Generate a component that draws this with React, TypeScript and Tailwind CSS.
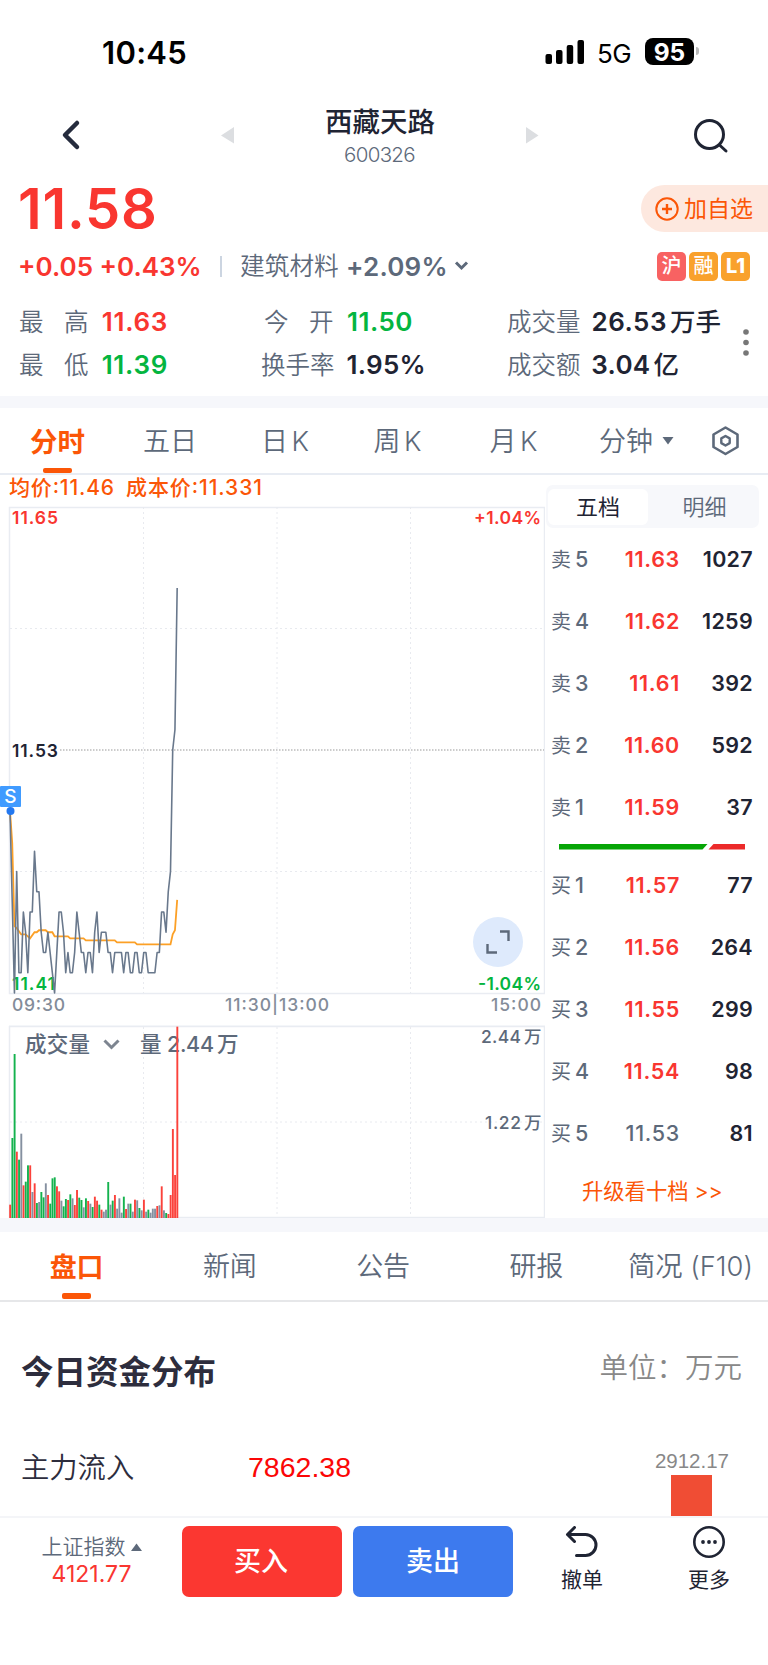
import type { ReactNode } from 'react'
import clsx from 'clsx'

// minute-by-minute prices, in cents above 11.00
const PRICES = [
    50, 45.5, 41, 47, 42, 42, 45, 44, 42, 45, 45, 48, 46, 46, 44, 43, 43, 44, 43, 42,
    41, 43, 45, 45, 44, 42, 43, 42, 42, 43, 45, 44, 43, 43, 42, 43, 43, 42, 44, 45,
    43, 44, 44, 44, 43, 43, 42, 43, 43, 43, 43, 42, 43, 43, 42, 42, 43, 43, 42, 42,
    43, 43, 42, 42, 42, 42, 43, 43, 45, 45, 44, 46, 47, 53, 54, 61,
]

// average price: [minute, cents above 11.00]
const AVERAGE = [
    [0, 50], [1, 48.4], [2, 44.3], [3, 44.2], [5, 43.9], [7, 43.9], [9, 43.7], [11, 44],
    [12, 44], [13, 44.1], [16, 44.1], [17, 44], [19, 44], [20, 43.8], [26, 43.8], [27, 43.7],
    [33, 43.7], [34, 43.6], [47, 43.6], [48, 43.5], [56, 43.5], [57, 43.4], [72, 43.4],
    [73, 43.9], [74, 44.1], [75, 45.6],
]

// volume bars: r = up, g = down, n = flat
const VOLUMES =
    'r40 g240 g492 r199 g175 n253 r98 g109 g158 r158 n78 r104 g45 n48 g78 g62 n104 r69 g43 g119 ' +
    'g122 r95 r80 n52 g35 g57 r54 g71 n59 r39 r84 g61 g54 n32 g59 r51 n43 g33 r64 r52 ' +
    'g40 r25 n19 n25 g108 n40 g52 r69 n28 n59 n16 g64 r27 n43 g43 n19 r55 n53 g30 n23 ' +
    'r55 n19 g25 n16 n28 n28 r36 n38 r95 n23 g15 r12 r69 r267 r129 r574'

const BAR_COLORS: Record<string, string> = { r: '#fb423b', g: '#14b24e', n: '#8590a0' }

const SELLS = [
    ['5', '11.63', '1027'],
    ['4', '11.62', '1259'],
    ['3', '11.61', '392'],
    ['2', '11.60', '592'],
    ['1', '11.59', '37'],
]

const BUYS = [
    ['1', '11.57', '77'],
    ['2', '11.56', '264'],
    ['3', '11.55', '299'],
    ['4', '11.54', '98'],
    ['5', '11.53', '81'],
]

const minuteX = (i: number) => 10 + i * 2.229
const priceY = (cents: number) => 32 + (65 - cents) * 20.25

function StatusBar() {
    return (
        <div className="flex h-[104px] items-start pt-[33px] pl-[102px] text-black">
            <span className="w-[443px] text-[31px] leading-[40px] font-semibold tracking-[0.3px]">10:45</span>
            <svg width="40" height="40" className="mr-[12px]">
                <rect x="0.500" y="21" width="6.500" height="10" rx="2" />
                <rect x="11" y="17" width="6.500" height="14" rx="2" />
                <rect x="21.700" y="12" width="6.500" height="19" rx="2" />
                <rect x="32.500" y="7" width="6.500" height="24" rx="2" />
            </svg>
            <span className="w-[48px] text-[26px] leading-[41px] tracking-[-0.5px]">5G</span>
            <span className="mt-[5px] h-[27px] w-[49px] rounded-[8px] bg-black text-center text-[24.500px] leading-[28px] font-bold text-white">95</span>
            <span className="mt-[14px] ml-[2px] h-[8px] w-[3px] rounded-r-full bg-[#b9b9b9]" />
        </div>
    )
}

function NavBar() {
    return (
        <div className="flex h-[80px] items-start">
            <svg width="320" height="60" fill="none">
                <path d="M77 19L65 31L77 43" stroke="#252b3d" strokeWidth="4.500" strokeLinecap="round" strokeLinejoin="round" />
                <path d="M221 31.500L234 23V39.500Z" fill="#dcdee1" />
            </svg>
            <div className="flex w-[120px] flex-col items-center">
                <h1 className="text-[27.500px] leading-[36px] font-medium whitespace-nowrap text-[#1f2433]">西藏天路</h1>
                <span className="mt-[2px] mr-[1px] text-[20.500px] leading-[26px] font-light tracking-[-0.7px] text-[#5d697a]">600326</span>
            </div>
            <svg width="328" height="60" fill="none">
                <path d="M86 23V39.500L98.500 31.500Z" fill="#dcdee1" />
                <circle cx="269.500" cy="30.500" r="14" stroke="#1f2433" strokeWidth="3" />
                <path d="M279.500 41L286 47" stroke="#1f2433" strokeWidth="3" strokeLinecap="round" />
            </svg>
        </div>
    )
}

function Badge({ className, children }: { className: string; children: ReactNode }) {
    return (
        <span className={clsx('flex size-[29px] items-center justify-center rounded-[5px] text-[20px] leading-none text-white', className)}>
            {children}
        </span>
    )
}

function Stat({ label, value, className }: { label: ReactNode; value: ReactNode; className: string }) {
    return (
        <div className="flex h-[43px] items-center whitespace-nowrap">
            <span className="flex pt-[1px] text-[24.500px] font-[350] text-[#5d697a]">{label}</span>
            <span className={clsx('ml-auto text-[26px] font-semibold', className)}>{value}</span>
        </div>
    )
}

function Unit({ children }: { children: ReactNode }) {
    return <span className="ml-[3px] text-[25.500px] font-medium tracking-normal">{children}</span>
}

function Quote() {
    return (
        <section className="flex h-[212px] flex-col">
            <div className="flex h-[56px] items-center justify-between pl-[18px]">
                <span className="mt-[-6px] text-[56px] leading-[56px] font-semibold tracking-[0.8px] text-[#f93630]">11.58</span>
                <button className="mt-[-7px] flex h-[47px] w-[127px] items-center rounded-l-full bg-[#fde8df] pl-[14px] text-[23px] text-[#fb5607]">
                    <svg width="24" height="24" fill="none" stroke="#fb5607" strokeWidth="2" className="mr-[5px]">
                        <circle cx="12" cy="12" r="10.700" />
                        <path d="M7 12H17M12 7V17" strokeWidth="2.400" />
                    </svg>
                    <span className="pt-[2px] whitespace-nowrap">加自选</span>
                </button>
            </div>
            <div className="flex h-[52px] items-center text-[26px] whitespace-nowrap">
                <span className="w-[220px] pl-[18px] font-semibold text-[#f93630]">+0.05 +0.43%</span>
                <span className="h-[21px] w-[2px] bg-[#ccd5e1]" />
                <span className="mt-[2px] ml-[18px] w-[106px] text-[24.700px] font-[350] text-[#5d697a]">建筑材料</span>
                <span className="w-[107px] font-semibold tracking-[0.2px] text-[#5d697a]">+2.09%</span>
                <svg width="16" height="12" fill="none" className="mr-[188px]">
                    <path d="M3 2.500L8.500 8L14 2.500" stroke="#5d697a" strokeWidth="3" />
                </svg>
                <div className="flex gap-[3px]">
                    <Badge className="bg-[#f86262] font-medium">沪</Badge>
                    <Badge className="bg-[#f9a12c] font-medium">融</Badge>
                    <Badge className="bg-[#f9a12c] font-extrabold">L1</Badge>
                </div>
            </div>
            <div className="flex pt-[8px]">
                <div className="ml-[19px] w-[149px]">
                    <Stat label={<><i className="w-[45px] not-italic">最</i>高</>} value="11.63" className="tracking-[0.7px] text-[#f93630]" />
                    <Stat label={<><i className="w-[45px] not-italic">最</i>低</>} value="11.39" className="tracking-[0.7px] text-[#04b540]" />
                </div>
                <div className="ml-[93px]">
                    <div className="w-[152px] pl-[3px]">
                        <Stat label={<><i className="w-[45px] not-italic">今</i>开</>} value="11.50" className="tracking-[0.5px] text-[#04b540]" />
                    </div>
                    <div className="w-[165px]">
                        <Stat label="换手率" value="1.95%" className="tracking-[0.3px] text-[#1f2433]" />
                    </div>
                </div>
                <div className="ml-[81px]">
                    <div className="w-[214px]">
                        <Stat label="成交量" value={<>26.53<Unit>万手</Unit></>} className="tracking-[0.5px] text-[#1f2433]" />
                    </div>
                    <div className="w-[172px]">
                        <Stat label="成交额" value={<>3.04<Unit>亿</Unit></>} className="tracking-[0.3px] text-[#1f2433]" />
                    </div>
                </div>
                <svg width="10" height="30" fill="#777" className="mt-[28px] ml-auto mr-[17px]">
                    <circle cx="5" cy="4" r="2.800" />
                    <circle cx="5" cy="14.500" r="2.800" />
                    <circle cx="5" cy="25" r="2.800" />
                </svg>
            </div>
        </section>
    )
}

function PeriodTabs() {
    return (
        <nav className="flex h-[67px] items-stretch border-b-2 border-[#e8ecf3] text-[27px] leading-[68px] font-[350] whitespace-nowrap text-[#5d697a] [word-spacing:-4px]">
            <div className="flex w-[115px] flex-col items-center text-[#fb5607]">
                <span className="h-[60px] text-[27.500px] leading-[69px] font-bold">分时</span>
                <i className="h-[5px] w-[29px] rounded-[2px] bg-[#fb5607]" />
            </div>
            <span className="w-[110px] text-center">五日</span>
            <span className="w-[120px] text-center">日 K</span>
            <span className="w-[105px] text-center">周 K</span>
            <span className="w-[127px] text-center">月 K</span>
            <span className="pl-[22px]">分钟</span>
            <svg width="12" height="10" className="mt-[28px] ml-[9px]" fill="#5d697a">
                <path d="M0.500 1H11.500L6 8.500Z" />
            </svg>
            <svg width="30" height="32" className="mt-[17px] ml-auto mr-[28px]" fill="none" stroke="#5d697a" strokeWidth="2.600" strokeLinejoin="round">
                <path d="M15.500 2.500L27.500 9.500V22L15.500 29L3.500 22V9.500Z" />
                <path d="M15.500 11L19.700 13.400V18.100L15.500 20.500L11.300 18.100V13.400Z" strokeWidth="2.400" />
            </svg>
        </nav>
    )
}

function PriceChart() {
    const line = PRICES.map((p, i) => `${minuteX(i)},${priceY(p)}`).join(' ')
    const average = AVERAGE.map(([i, p]) => `${minuteX(i)},${priceY(p)}`).join(' ')
    return (
        <svg width="545" height="551" viewBox="0 0 545 551" fill="none" fontWeight="600" fontSize="17.500" className="block">
            <g fill="#fb5607" fontSize="21" fontWeight="500">
                <text x="9" y="20" textLength="105">均价:11.46</text>
                <text x="126" y="20" textLength="136">成本价:11.331</text>
            </g>
            <rect x="9.500" y="32.500" width="535" height="486" stroke="#e9ecf2" strokeWidth="1.500" />
            <path d="M143.500 32V518M277 32V518M410.500 32V518M10 153.500H544M10 396.500H544" stroke="#e8eaef" strokeDasharray="2 3" />
            <path d="M60 275H544" stroke="#999" strokeDasharray="1.500 1.500" />
            <g fill="#f93630">
                <text x="12" y="49" textLength="46">11.65</text>
                <text x="474" y="49" textLength="67">+1.04%</text>
            </g>
            <text x="12" y="282" textLength="46" fill="#1f2433">11.53</text>
            <text x="12" y="514.500" textLength="43" fill="#04b540">11.41</text>
            <text x="478" y="514.500" textLength="63" fill="#04b540">-1.04%</text>
            <polyline points={average} stroke="#fca026" strokeWidth="1.800" />
            <polyline points={line} stroke="#69788c" strokeWidth="1.600" strokeLinejoin="round" />
            <circle cx="10.500" cy="336" r="4" fill="#2378f0" />
            <rect y="311" width="21" height="21" rx="1" fill="#409bff" />
            <text x="10.500" y="328" fontSize="19" fontWeight="500" textAnchor="middle" fill="#fff">S</text>
            <circle cx="498" cy="467" r="25" fill="#deeafc" />
            <path d="M500 456.500H508.500V466M487.500 469V477.500H497" stroke="#5d697a" strokeWidth="2.400" />
            <g fill="#838c99" fontWeight="500">
                <text x="12" y="536" textLength="53">09:30</text>
                <text x="225" y="536" textLength="104">11:30|13:00</text>
                <text x="491" y="536" textLength="50">15:00</text>
            </g>
            <path d="M9 551H545" stroke="#e9ecf2" />
        </svg>
    )
}

function VolumeChart() {
    return (
        <svg width="545" height="192" viewBox="0 0 545 192" fill="none" className="block">
            <rect x="9.500" y=".5" width="535" height="191" stroke="#e9ecf2" strokeWidth="1.500" />
            <path d="M143.500 1V191M277 1V191M410.500 1V191M10 96H544" stroke="#e8eaef" strokeDasharray="2 3" />
            <g fontSize="21.500" fill="#5d697a" fontWeight="500">
                <text x="25" y="26" textLength="65">成交量</text>
                <text x="140" y="26">量</text>
                <text x="167" y="26" textLength="47">2.44</text>
                <text x="217" y="26">万</text>
            </g>
            <path d="M104.500 14.500L111.500 21.500L118.500 14.500" stroke="#7d8590" strokeWidth="3" />
            {VOLUMES.split(' ').map((bar, i) => {
                const height = Number(bar.slice(1)) / 3
                return <rect key={i} x={minuteX(i) - 0.8} y={192 - height} width="1.900" height={height} fill={BAR_COLORS[bar[0]]} />
            })}
            <g fontSize="17.500" fill="#5d697a" fontWeight="500">
                <text x="481" y="17" textLength="40">2.44</text>
                <text x="524" y="17">万</text>
                <text x="485" y="103" textLength="36">1.22</text>
                <text x="524" y="103">万</text>
            </g>
        </svg>
    )
}

function BookRow({ side, row }: { side: string; row: string[] }) {
    const [level, price, amount] = row
    return (
        <div className="flex h-[62px] items-center text-[21.500px] font-semibold">
            <span className="w-[48px] text-[20px] font-normal text-[#5d697a]">
                {side}<span className="ml-[4px] text-[21.500px] font-medium">{level}</span>
            </span>
            <span className={clsx('w-[81px] text-right tracking-[0.7px]', price === '11.53' ? 'font-medium text-[#5d697a]' : 'text-[#f93630]')}>{price}</span>
            <span className="ml-auto tracking-[0.3px] text-[#1f2433]">{amount}</span>
        </div>
    )
}

function OrderBook() {
    return (
        <aside className="flex-1 pt-[10px]">
            <div className="ml-[1px] flex h-[43px] w-[213px] items-center rounded-[7px] bg-[#f7f8fb] pl-[2px] text-center text-[22px] leading-[36px]">
                <span className="h-[36px] w-[100px] rounded-[6px] bg-white text-[#1f2433]">五档</span>
                <span className="flex-1 pl-[2px] font-[350] text-[#5d697a]">明细</span>
            </div>
            <div className="pr-[15px] pl-[6px]">
                {SELLS.map(row => <BookRow key={row[0]} side="卖" row={row} />)}
                <svg width="187" height="16" className="ml-[8px] block">
                    <path d="M0 6H148.500L143.500 11.500H0Z" fill="#06a506" />
                    <path d="M154.500 6H186V11.500H149.500Z" fill="#ec2a2a" />
                </svg>
                {BUYS.map(row => <BookRow key={row[0]} side="买" row={row} />)}
            </div>
            <div className="mt-[11px] ml-[37px] text-[21.300px] leading-[32px] text-[#fb5607]">升级看十档 &gt;&gt;</div>
        </aside>
    )
}

function InfoTabs() {
    return (
        <nav className="flex h-[70px] border-b-2 border-[#e6e7e9] text-center text-[27px] leading-[70px] font-[350] whitespace-nowrap text-[#5d697a]">
            <div className="flex flex-1 flex-col items-center text-[#fb5607]">
                <span className="h-[61px] leading-[71px] font-bold">盘口</span>
                <i className="h-[6px] w-[29px] rounded-[2px] bg-[#fb5607]" />
            </div>
            <span className="flex-1">新闻</span>
            <span className="flex-1">公告</span>
            <span className="flex-1">研报</span>
            <span className="w-[155px] text-[27.300px]">简况 (F10)</span>
        </nav>
    )
}

function FundFlow() {
    return (
        <section className="h-[214px] overflow-hidden">
            <div className="flex items-center justify-between pt-[45px] pr-[26px] pl-[21px]">
                <h2 className="text-[32.500px] leading-[48px] font-bold text-[#2d2d3d]">今日资金分布</h2>
                <span className="mb-[9px] text-[28.500px] font-[350] text-[#888]">单位：万元</span>
            </div>
            <div className="flex">
                <span className="mt-[45px] w-[248px] pl-[21px] text-[28.300px] leading-[48px] font-[350] text-[#2d2d3d]">主力流入</span>
                <span className="mt-[44px] font-['Liberation_Sans'] text-[28.500px] leading-[48px] text-[#fb0606]">7862.38</span>
                <div className="mt-[50px] mr-[39px] ml-auto flex flex-col items-center">
                    <span className="font-['Liberation_Sans'] text-[20.500px] leading-[24px] text-[#888]">2912.17</span>
                    <i className="mt-[2px] h-[46px] w-[41px] bg-[#f04d34]" />
                </div>
            </div>
        </section>
    )
}

function TradeBar() {
    return (
        <footer className="flex h-[149px] border-t-2 border-[#f4f5f8] pt-[8px] whitespace-nowrap">
            <div className="flex w-[183px] flex-col items-center pt-[7px]">
                <div className="flex items-center gap-[5px] text-[21px] leading-[28px] font-[350] text-[#5d697a]">
                    上证指数
                    <svg width="11" height="9" fill="#5d697a"><path d="M0 8H11L5.500 .5Z" /></svg>
                </div>
                <span className="text-[23px] leading-[26px] text-[#f93630]">4121.77</span>
            </div>
            <button className="ml-[-1px] h-[71px] w-[160px] rounded-[7px] bg-[#fb3731] pt-[2px] pr-[2px] text-[27px] font-medium text-white">买入</button>
            <button className="ml-[11px] h-[71px] w-[160px] rounded-[7px] bg-[#3d7aee] pt-[2px] text-[27px] font-medium text-white">卖出</button>
            <div className="ml-[38px] flex w-[62px] flex-col items-center text-[21px] leading-[32px] text-[#1f2433]">
                <svg width="34" height="38" fill="none" stroke="#1f2433" strokeWidth="3" strokeLinecap="round" strokeLinejoin="round">
                    <path d="M9.500 1.500L2.500 8.500L9.500 15.500M2.500 8.500H20.500A10.400 10.400 0 0 1 20.500 29.500H11.500" />
                </svg>
                撤单
            </div>
            <div className="ml-[65px] flex w-[62px] flex-col items-center text-[21px] leading-[32px] text-[#1f2433]">
                <svg width="34" height="38" fill="none" stroke="#1f2433" strokeWidth="2.600">
                    <circle cx="17" cy="16" r="14.700" />
                    <g fill="#1f2433" stroke="none">
                        <circle cx="11" cy="16" r="1.900" />
                        <circle cx="17" cy="16" r="1.900" />
                        <circle cx="23" cy="16" r="1.900" />
                    </g>
                </svg>
                更多
            </div>
        </footer>
    )
}

export default function App() {
    return (
        <div className="h-[1665px] w-[768px] overflow-hidden bg-white font-['Inter','Noto_Sans_CJK_SC',sans-serif]">
            <StatusBar />
            <NavBar />
            <Quote />
            <div className="h-[12px] bg-[#f6f7fb]" />
            <PeriodTabs />
            <div className="flex h-[743px]">
                <div className="w-[545px]">
                    <PriceChart />
                    <VolumeChart />
                </div>
                <OrderBook />
            </div>
            <div className="h-[14px] bg-[#f6f7fb]" />
            <InfoTabs />
            <FundFlow />
            <TradeBar />
        </div>
    )
}
